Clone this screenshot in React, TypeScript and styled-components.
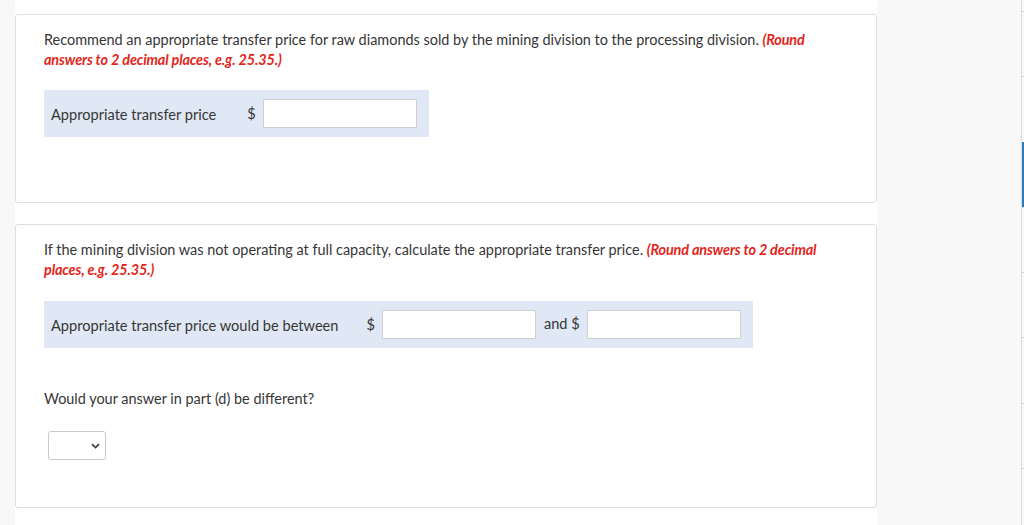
import React from 'react'
import styled, { createGlobalStyle } from 'styled-components'

const GlobalStyle = createGlobalStyle`
  html, body {
    margin: 0;
    padding: 0;
    background: #f8f8f8;
  }
  body {
    font-family: Lato, 'Open Sans', 'Liberation Sans', sans-serif;
    color: #363636;
  }
`

const Page = styled.div`
  display: flex;
  width: 1024px;
  height: 525px;
  overflow: hidden;
  background: #f8f8f8;
`

const Gutter = styled.div`
  width: 15px;
  flex: none;
`

const Main = styled.main`
  width: 862px;
  flex: none;
  background: #fff;
  padding-top: 14px;
  display: flex;
  flex-direction: column;
  gap: 21px;
`

const Aside = styled.aside`
  flex: 1;
`

const Rail = styled.div`
  width: 2px;
  flex: none;
  border-left: 1px solid #dcdcdc;
  padding-top: 11px;
  display: flex;
  flex-direction: column;
`

const RailStep = styled.div<{ $active?: boolean }>`
  height: 65.3px;
  flex: none;
  border-top: 1px solid ${(p) => (p.$active ? '#2e7bbd' : '#d4d4d4')};
  background: ${(p) => (p.$active ? '#2e7bbd' : 'transparent')};
  box-sizing: border-box;
`

const Card = styled.section<{ $bottom: number }>`
  border: 1px solid #dedede;
  border-radius: 3px;
  padding: 15px 28px ${(p) => p.$bottom}px 28px;
  background: #fff;
`

const Prompt = styled.p`
  margin: 0;
  font-size: 14.45px;
  line-height: 20px;
  color: #363636;
`

const Hint = styled.span`
  color: #e2261c;
  font-weight: 700;
  font-style: italic;
  letter-spacing: -0.15px;
`

const AnswerBox = styled.div<{ $top: number }>`
  display: inline-flex;
  align-items: center;
  height: 47px;
  margin-top: ${(p) => p.$top}px;
  padding: 0 12px 0 7px;
  background: #dfe8f4;
  font-size: 14.6px;
`

const Label = styled.span<{ $gap: number }>`
  margin-right: ${(p) => p.$gap}px;
  padding-top: 2px;
`

const Dollar = styled.span`
  margin-right: 7px;
`

const And = styled.span`
  margin: 0 7px 3px 8px;
`

const Field = styled.input`
  width: 154px;
  height: 29px;
  box-sizing: border-box;
  border: 1px solid #cfcfcf;
  border-radius: 1px;
  background: #fff;
  padding: 0 6px;
  font: inherit;
  outline: none;
`

const Question = styled(Prompt)`
  margin-top: 41px;
`

const Select = styled.div`
  margin: 22px 0 0 4px;
  width: 58px;
  height: 29px;
  box-sizing: border-box;
  border: 1px solid #c9c9c9;
  border-radius: 3px;
  background: #fff;
  display: flex;
  align-items: center;
  justify-content: flex-end;
  padding-right: 5px;
`

const Chevron = () => (
  <svg width="9" height="6" viewBox="0 0 9 6">
    <path d="M1 1.2 L4.5 4.6 L8 1.2" fill="none" stroke="#444" strokeWidth="1.8" />
  </svg>
)

export default function App() {
  return (
    <>
      <GlobalStyle />
      <Page>
        <Gutter />
        <Main>
          <Card $bottom={65}>
            <Prompt>
              Recommend an appropriate transfer price for raw diamonds sold by the mining division to the processing
              division. <Hint>(Round answers to 2 decimal places, e.g. 25.35.)</Hint>
            </Prompt>
            <AnswerBox $top={20}>
              <Label $gap={31}>Appropriate transfer price</Label>
              <Dollar>$</Dollar>
              <Field />
            </AnswerBox>
          </Card>
          <Card $bottom={47}>
            <Prompt>
              If the mining division was not operating at full capacity, calculate the appropriate transfer price.{' '}
              <Hint>(Round answers to 2 decimal places, e.g. 25.35.)</Hint>
            </Prompt>
            <AnswerBox $top={21}>
              <Label $gap={28}>Appropriate transfer price would be between</Label>
              <Dollar>$</Dollar>
              <Field />
              <And>and $</And>
              <Field />
            </AnswerBox>
            <Question>Would your answer in part (d) be different?</Question>
            <Select>
              <Chevron />
            </Select>
          </Card>
        </Main>
        <Aside />
        <Rail>
          {[0, 1, 2, 3, 4, 5, 6, 7].map((i) => (
            <RailStep key={i} $active={i === 2} />
          ))}
        </Rail>
      </Page>
    </>
  )
}
